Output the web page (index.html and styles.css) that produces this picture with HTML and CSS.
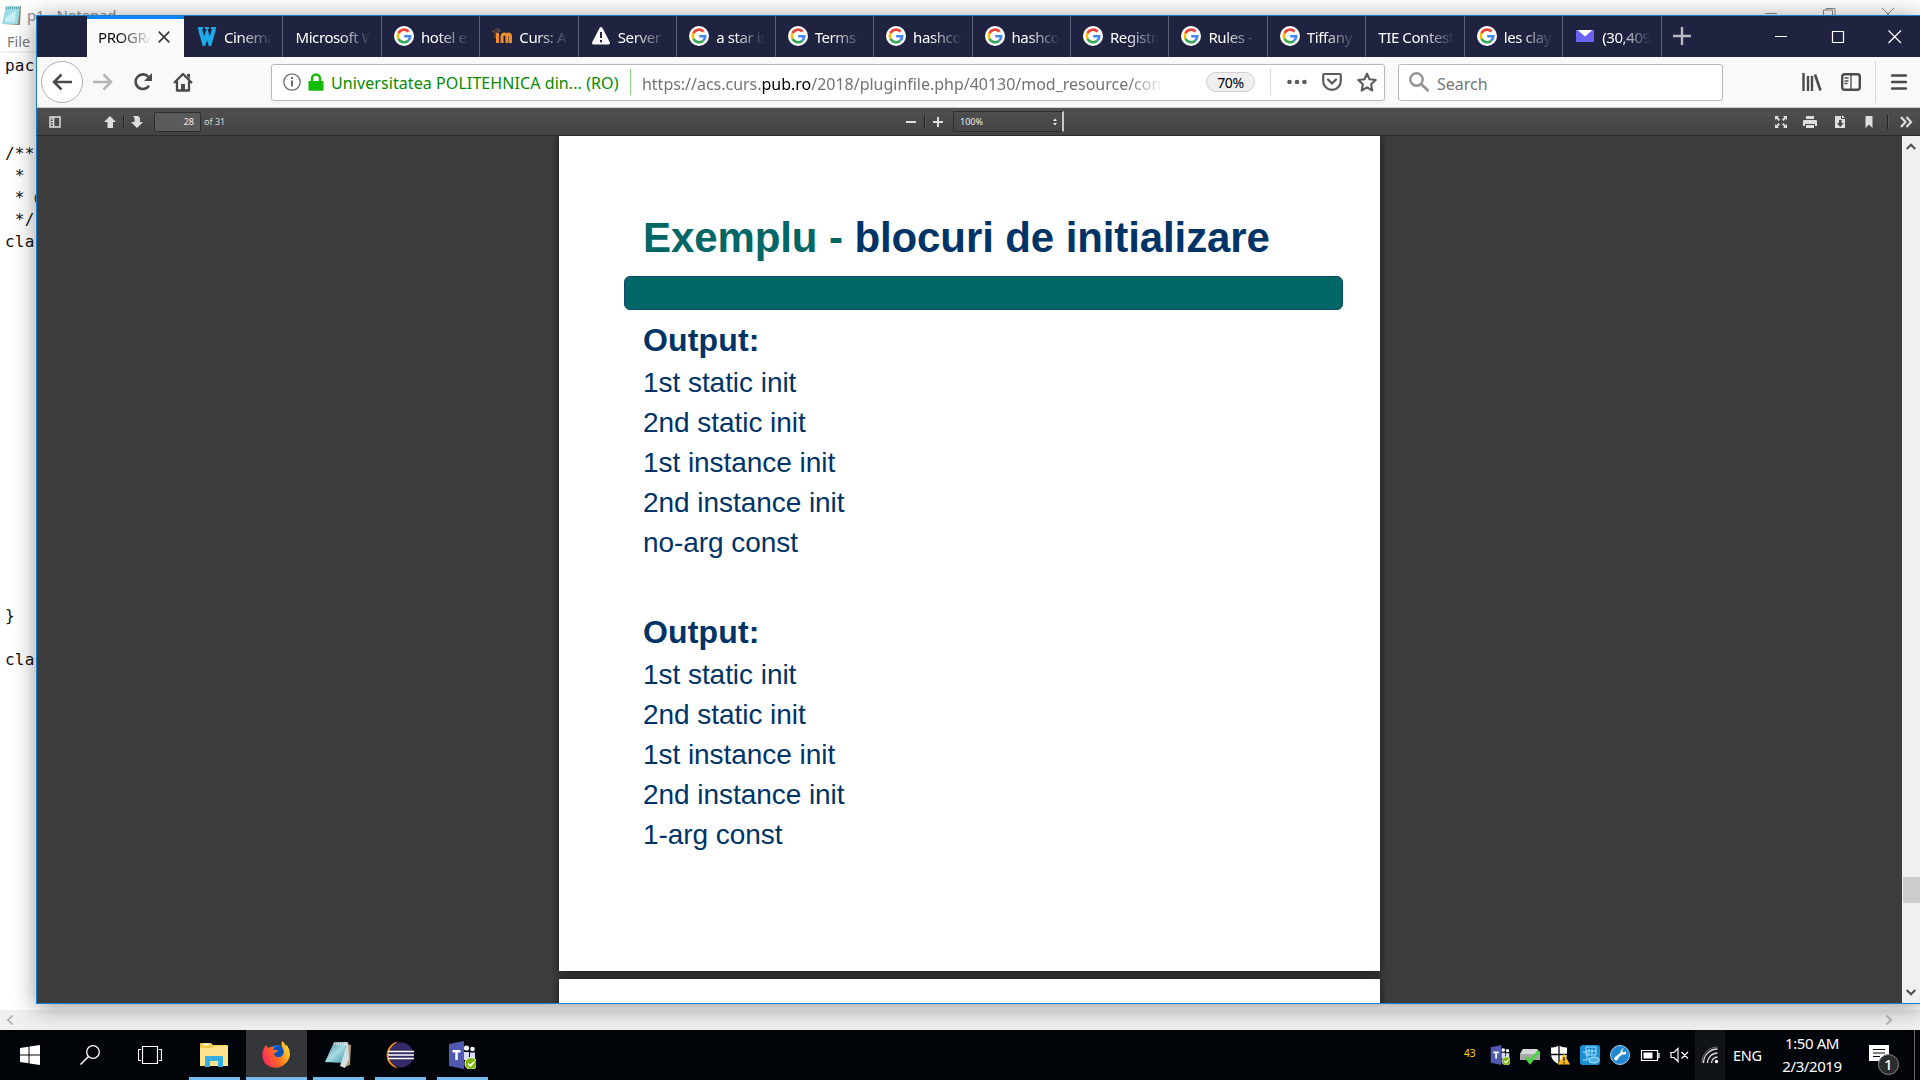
FILE: index.html
```html
<!DOCTYPE html>
<html lang="en">
<head>
<meta charset="utf-8">
<title>Exemplu - blocuri de initializare</title>
<link rel="stylesheet" href="styles.css">
</head>
<body>
<svg class="defs" aria-hidden="true">
  <symbol id="google" viewBox="0 0 20 20">
    <circle cx="10" cy="10" r="10" fill="#fff"/>
    <g fill="none" stroke-width="2.6">
      <path d="M14.6 5.6A6.2 6.2 0 0 0 4.5 7.2" stroke="#ea4335"/>
      <path d="M4.5 7.2a6.2 6.2 0 0 0 0 5.7" stroke="#fbbc05"/>
      <path d="M4.5 12.9a6.2 6.2 0 0 0 9.6 1.8" stroke="#34a853"/>
      <path d="M10.2 10.2h6c0 2-.8 3.5-2.1 4.5" stroke="#4285f4"/>
    </g>
  </symbol>
  <symbol id="teams" viewBox="0 0 28 28">
    <circle cx="18.5" cy="7" r="2.6" fill="#fff"/><circle cx="24.5" cy="8" r="2.3" fill="#fff"/>
    <path d="M16 11h5v8h-5zM22 11.5h5v6h-5z" fill="#d8d9f2"/>
    <path d="M1 3l15-3v28L1 25z" fill="#5059b0"/>
    <path d="M4.5 9h8v2.4H9.8V19H7.3v-7.6H4.5z" fill="#fff"/>
    <circle cx="23" cy="22.5" r="6" fill="#7db700" stroke="#fff"/>
    <path d="M20 22.5l2.3 2.4 4-4.4" fill="none" stroke="#fff" stroke-width="1.7"/>
  </symbol>
  <symbol id="notepad" viewBox="0 0 28 28">
    <path d="M23 3l4 1-1 20-5 2z" fill="#b39a68"/>
    <path d="M10 1h14l-5 21L1 21z" fill="url(#paper)"/>
    <path d="M24 1l1 17-4 9-5-2z" fill="#cfdfe3"/>
    <path d="M10 3h14" stroke="#dbe4e6" stroke-width="2" stroke-dasharray="1 1" fill="none"/>
  </symbol>
  <linearGradient id="paper" x1="0" y1="0" x2="1" y2="1"><stop offset="0" stop-color="#3d7f8d"/><stop offset=".5" stop-color="#a7dce5"/><stop offset="1" stop-color="#2c8ca1"/></linearGradient>
  <linearGradient id="fox" x1="0" y1=".6" x2="1" y2=".2"><stop offset="0" stop-color="#ff2a5c"/><stop offset=".45" stop-color="#ff6a22"/><stop offset="1" stop-color="#ffe62e"/></linearGradient>
</svg>

<main class="desktop">
  <section class="notepad">
    <header class="np-title">
      <svg class="np-icon" viewBox="0 0 20 22"><path d="M4 2h15l-1 19-16-1z" fill="#8a8068"/><path d="M4 2h14l-2 18H0z" fill="#9bdbe6"/><path d="M4 4h13" stroke="#5b9eaa" stroke-width="2" stroke-dasharray="1 1"/><path d="M3 14l11-8-1 12H3z" fill="#c5eef3"/></svg>
      <span>p1 - Notepad</span>
      <svg class="np-controls" viewBox="0 0 130 20"><path d="M0 13.5h12M58.5 20v-10h9v10M61 10V8.5h9V18M117 8l12 12M129 8l-12 12" fill="none" stroke="#8a8a8a"/></svg>
    </header>
    <div class="np-menu">File</div>
    <pre class="np-text">pac



/**
 *
 * @
 */
cla
















}

cla</pre>
    <footer class="np-scroll">
      <svg viewBox="0 0 8 10"><path d="M6.5 .5L2 5l4.5 4.5" fill="none" stroke="#b8b8b8" stroke-width="2"/></svg>
      <svg viewBox="0 0 8 10"><path d="M1.5 .5L6 5l-4.5 4.5" fill="none" stroke="#b8b8b8" stroke-width="2"/></svg>
    </footer>
  </section>

  <section class="firefox">
    <header class="tabs">
      <div class="tab active"><span class="label">PROGRA</span><svg class="close" viewBox="0 0 12 12"><path d="M.7.7l10.6 10.6M11.3.7L.7 11.3" stroke="#3b3b3d" stroke-width="1.7"/></svg></div>
      <div class="tab"><svg class="fav" viewBox="0 0 20 20"><path d="M3 3l4 14 3-9 3 9 4-14" fill="none" stroke="#1ca9e6" stroke-width="4"/><path d="M1 2h5M8 2h4M14 2h5" stroke="#1ca9e6" stroke-width="2"/></svg><span class="label">Cinema</span></div>
      <div class="tab"><span class="label">Microsoft W</span></div>
      <div class="tab"><svg class="fav"><use href="#google"/></svg><span class="label">hotel e</span></div>
      <div class="tab"><svg class="fav" viewBox="0 0 20 20"><path d="M0 6l6-3 2 2-5 2v5" fill="none" stroke="#5a4a45" stroke-width="1.5"/><path d="M5.5 17V7M10 17v-6q0-3 2.5-3T15 11v6M15 17v-6q0-3 1.8-3T18.5 11v6" fill="none" stroke="#ef8a2d" stroke-width="3"/></svg><span class="label">Curs: A</span></div>
      <div class="tab"><svg class="fav" viewBox="0 0 20 20"><path d="M10 2.5L17.5 17h-15z" fill="#f9f9fa" stroke="#f9f9fa" stroke-width="3" stroke-linejoin="round"/><path d="M10 6v6M10 14v2.2" stroke="#202340" stroke-width="2"/></svg><span class="label">Server I</span></div>
      <div class="tab"><svg class="fav"><use href="#google"/></svg><span class="label">a star is</span></div>
      <div class="tab"><svg class="fav"><use href="#google"/></svg><span class="label">Terms -</span></div>
      <div class="tab"><svg class="fav"><use href="#google"/></svg><span class="label">hashco</span></div>
      <div class="tab"><svg class="fav"><use href="#google"/></svg><span class="label">hashco</span></div>
      <div class="tab"><svg class="fav"><use href="#google"/></svg><span class="label">Registr</span></div>
      <div class="tab"><svg class="fav"><use href="#google"/></svg><span class="label">Rules -</span></div>
      <div class="tab"><svg class="fav"><use href="#google"/></svg><span class="label">Tiffany</span></div>
      <div class="tab"><span class="label">TIE Contest</span></div>
      <div class="tab"><svg class="fav"><use href="#google"/></svg><span class="label">les clay</span></div>
      <div class="tab"><svg class="fav" viewBox="0 0 20 20"><path d="M1 4h18v12H1z" fill="#6b63f6"/><path d="M2.5 4h15L10 10.5z" fill="#fff"/></svg><span class="label">(30,409</span></div>
      <svg class="newtab" viewBox="0 0 18 18"><path d="M9 0v18M0 9h18" stroke="#b9b9c2" stroke-width="2.4"/></svg>
      <svg class="win-controls" viewBox="0 0 128 14"><path d="M0 6.5h12M57.5 1.5h11v11h-11zM113.5.5l12.5 12.5M126 .5L113.5 13" fill="none" stroke="#fff" stroke-width="1.2"/></svg>
    </header>

    <nav class="navbar">
      <div class="back"><svg viewBox="0 0 20 18"><path d="M20 9H2M9.5 1.5L2 9l7.5 7.5" fill="none" stroke="#4a4a4c" stroke-width="2.5"/></svg></div>
      <svg class="forward" viewBox="0 0 20 18"><path d="M0 9h18M10.5 1.5L18 9l-7.5 7.5" fill="none" stroke="#b5b5b6" stroke-width="2.5"/></svg>
      <svg class="reload" viewBox="0 0 20 20"><path d="M16 13.7A7.3 7.3 0 1 1 15.5 5" fill="none" stroke="#4a4a4c" stroke-width="2.6"/><path d="M19 1v8h-8z" fill="#4a4a4c"/></svg>
      <svg class="home" viewBox="0 0 20 20"><path d="M1 11l9-9 9 9M4 9v9.5h12V9" fill="none" stroke="#4a4a4c" stroke-width="2.3" stroke-linejoin="round"/><path d="M8 12h4v6H8zM14 2h3v5l-3-3z" fill="#4a4a4c"/></svg>
      <div class="urlbar">
        <svg class="info" viewBox="0 0 18 18"><circle cx="9" cy="9" r="8.2" fill="none" stroke="#6b6b6d" stroke-width="1.3"/><path d="M9 4v2M9 7.5v6" stroke="#6b6b6d" stroke-width="2"/></svg>
        <svg class="lock" viewBox="0 0 16 18"><rect x=".5" y="8" width="15" height="9.7" rx="1.3" fill="#12bc00"/><path d="M4 9V5.5a4 4 0 0 1 8 0V9" fill="none" stroke="#12bc00" stroke-width="2.4"/></svg>
        <span class="identity">Universitatea POLITEHNICA din... (RO)</span>
        <span class="url">https://acs.curs.<b>pub.ro</b>/2018/pluginfile.php/40130/mod_resource/con</span>
        <span class="zoom">70%</span>
        <div class="actions">
          <svg class="dots" viewBox="0 0 20 6"><g fill="#5c5c5e"><circle cx="2.5" cy="3" r="2.3"/><circle cx="10" cy="3" r="2.3"/><circle cx="17.5" cy="3" r="2.3"/></g></svg>
          <svg class="act" viewBox="0 0 20 20"><path d="M2.5 2h15q1.3 0 1.3 1.3V9a8.8 8.8 0 0 1-17.6 0V3.3Q1.2 2 2.5 2z" fill="none" stroke="#5c5c5e" stroke-width="2.2"/><path d="M6 7.5l4 4 4-4" fill="none" stroke="#5c5c5e" stroke-width="2.3" stroke-linecap="round" stroke-linejoin="round"/></svg>
          <svg class="act" viewBox="0 0 20 20"><path d="M10 1.7l2.5 5.6 6.2.7-4.6 4.2 1.2 6.3L10 15.4l-5.3 3.1 1.2-6.3L1.3 8l6.2-.7z" fill="none" stroke="#5c5c5e" stroke-width="2.1" stroke-linejoin="round"/></svg>
        </div>
      </div>
      <div class="searchbox"><svg viewBox="0 0 20 20"><circle cx="7.5" cy="7.5" r="6.2" fill="none" stroke="#939394" stroke-width="2.4"/><path d="M12 12l7.5 7" stroke="#939394" stroke-width="2.8"/></svg><span>Search</span></div>
      <div class="nav-end">
        <svg class="library" viewBox="0 0 20 18"><path d="M1.5 0v18M6 3v15M10 3v15" stroke="#4a4a4c" stroke-width="2.4"/><path d="M13 1.5l5.5 16" stroke="#4a4a4c" stroke-width="2.6"/></svg>
        <svg class="side" viewBox="0 0 20 18"><rect x="1.2" y="1.2" width="17.6" height="15.6" rx="2.5" fill="none" stroke="#4a4a4c" stroke-width="2.4"/><path d="M10 1v16M3.5 5h4M3.5 8h4M3.5 10.5h3" stroke="#4a4a4c" stroke-width="1.3"/></svg>
        <div class="menu"><svg viewBox="0 0 16 16"><path d="M1 1.5h14M1 8h14M1 14.5h14" stroke="#4a4a4c" stroke-width="2.3" stroke-linecap="round"/></svg></div>
      </div>
    </nav>

    <div class="pdfbar">
      <div class="pdf-left">
        <svg class="p-side" viewBox="0 0 12 12"><path d="M1 1h10v10H1zM4.5 1v10" fill="none" stroke="#dedede" stroke-width="1.5"/><path d="M2 3h2M2 5.5h2M2 8h2" stroke="#dedede"/></svg>
        <svg class="p-up" viewBox="0 0 12 12"><path d="M6 0l6 6H9v6H3.5V6H0z" fill="#dedede"/></svg>
        <i></i>
        <svg class="p-down" viewBox="0 0 12 12"><path d="M6 12l6-6H9V2L7 0H2l1.5 2v4H0z" fill="#dedede"/></svg>
        <span class="page-input">28</span><span>of 31</span>
      </div>
      <div class="pdf-mid">
        <svg viewBox="0 0 10 10"><path d="M0 5h10" stroke="#dedede" stroke-width="2"/></svg>
        <i></i>
        <svg viewBox="0 0 10 10"><path d="M0 5h10M5 0v10" stroke="#dedede" stroke-width="2"/></svg>
        <span class="scale">100%<svg viewBox="0 0 6 8"><path d="M1 3l2-2.5L5 3zM1 5l2 2.5L5 5z" fill="#eee"/></svg></span>
      </div>
      <div class="pdf-right">
        <svg viewBox="0 0 14 14"><path d="M1 5V1h4L3.7 2.3 6 4.5 4.5 6 2.3 3.7zM13 5V1H9l1.3 1.3L8 4.5 9.5 6l2.2-2.3zM1 9v4h4l-1.3-1.3L6 9.5 4.5 8l-2.2 2.3zM13 9v4H9l1.3-1.3L8 9.5 9.5 8l2.2 2.3z" fill="#dedede"/></svg>
        <svg viewBox="0 0 14 14"><path d="M3 1h8v3H3zM0 6q0-1 1-1h12q1 0 1 1v5h-2V9H2v2H0zM3 10h8v3H3z" fill="#dedede"/></svg>
        <svg viewBox="0 0 14 14"><path d="M2 1h6v3h4v9H2zM9 0l3 3H9z" fill="#dedede"/><path d="M6 5h2.5v3h2L7.2 12 4 8h2z" fill="#444"/></svg>
        <svg viewBox="0 0 14 14"><path d="M3.5 1h7v12L7 9.5 3.5 13z" fill="#dedede"/></svg>
        <i></i>
        <svg viewBox="0 0 14 14"><path d="M2 2l4.500 5L2 12M7.500 2L12 7l-4.500 5" fill="none" stroke="#dedede" stroke-width="2.2"/></svg>
      </div>
    </div>

    <div class="viewer">
      <div class="pages">
        <article class="page slide">
          <h1><em>Exemplu - </em>blocuri de initializare</h1>
          <div class="rule"></div>
          <div class="output">
            <h2>Output:</h2>
            <p>1st static init</p><p>2nd static init</p><p>1st instance init</p><p>2nd instance init</p><p>no-arg const</p>
          </div>
          <div class="output">
            <h2>Output:</h2>
            <p>1st static init</p><p>2nd static init</p><p>1st instance init</p><p>2nd instance init</p><p>1-arg const</p>
          </div>
        </article>
        <div class="page next"></div>
      </div>
      <div class="scrollbar">
        <svg viewBox="0 0 10 7"><path d="M.7 6L5 1.7 9.3 6" fill="none" stroke="#505050" stroke-width="2"/></svg>
        <div class="thumb"></div>
        <svg viewBox="0 0 10 7"><path d="M.7 1L5 5.3 9.3 1" fill="none" stroke="#505050" stroke-width="2"/></svg>
      </div>
    </div>
  </section>
</main>

<footer class="taskbar">
  <div class="sys"><svg width="20" height="20" viewBox="0 0 20 20"><path d="M0 3l8.5-1.2v7.700H0zM9.5 1.6L20 0v9.5H9.5zM0 10.5h8.5v7.700L0 17zM9.5 10.5H20V20L9.5 18.4z" fill="#fff"/></svg></div>
  <div class="sys"><svg width="20" height="20" viewBox="0 0 20 20"><circle cx="13" cy="7" r="6.3" fill="none" stroke="#fff" stroke-width="1.3"/><path d="M8.5 11.5L.5 19.5" stroke="#fff" stroke-width="1.5"/></svg></div>
  <div class="sys"><svg width="24" height="18" viewBox="0 0 24 18"><path d="M4.5.5h15v17h-15zM3 3.5H.5v11H3M21 3.5h2.5v11H21" fill="none" stroke="#fff" stroke-width="1.2"/></svg></div>
  <div class="app"><svg width="28" height="24" viewBox="0 0 28 24"><path d="M0 1q0-1 1-1h10l2 2h14q1 0 1 1v20H0z" fill="#f5c84c"/><path d="M0 5h12l2-2h14v20H0z" fill="#ffe28c"/><path d="M5 24V14q0-1 1-1h16q1 0 1 1v10h-5v-6h-8v6z" fill="#35aee6"/><path d="M3 1.5h6" stroke="#fff" stroke-width="1.5"/></svg></div>
  <div class="app current"><svg width="28" height="28" viewBox="0 0 28 28"><circle cx="14.5" cy="14" r="10" fill="#1271d8"/><path d="M15 5q4-1 6 3l2 7-6 7H8l-2-8z" fill="#0a52bb"/><path d="M4 4l2 3q3-2 6-1l-1 3h5q-1 3-4 3l1 3q4 3 8-1 2-4-1-8-1-3 0-6 3 2 4 5l1-1q6 10 0 17-7 8-16 5Q-2 22 1 9z" fill="url(#fox)"/></svg></div>
  <div class="app"><svg width="28" height="28"><use href="#notepad"/></svg></div>
  <div class="app"><svg class="eclipse" width="30" height="28" viewBox="0 0 30 28"><path d="M14 .5a13.7 13.7 0 0 0 0 27A16 16 0 0 1 14 .5" fill="#f7941e"/><circle cx="17" cy="14" r="12.5" fill="#372a68"/><path d="M4 10.5h26M4 14h26M4 17.5h26" stroke="#fff" stroke-width="1.7"/></svg></div>
  <div class="app"><svg width="28" height="28"><use href="#teams"/></svg></div>
  <div class="tray">
    <span class="temp">43</span>
    <svg viewBox="0 0 28 28"><use href="#teams"/></svg>
    <svg viewBox="0 0 20 20"><path d="M3 4h14l3 5v6H0V9z" fill="#a5a7a8"/><path d="M3 4h14l3 5H0z" fill="#d6d8d8"/><path d="M6 12l4 5 9-11" fill="none" stroke="#4fd14a" stroke-width="3.4"/></svg>
    <svg viewBox="0 0 20 20"><path d="M9 .5q4 2.5 8 2v7q0 6-8 10-8-4-8-10v-7q4 .5 8-2z" fill="#fff"/><path d="M9 0v20M1 9.5h16" stroke="#05070c" stroke-width="1.3"/><path d="M14 8.5L20 19.5H8z" fill="#fdb813"/><path d="M14 12.5v3.5M14 17v1.5" stroke="#222" stroke-width="1.4"/></svg>
    <svg viewBox="0 0 20 20"><rect width="20" height="20" rx="3" fill="#1c8ed2"/><path d="M3 7h4v8H3M6 2h10v8H6zM9 4v6M12 4v6M6 6h10M8 14h9M9 17h8" fill="none" stroke="#a8e2ff"/><ellipse cx="14" cy="15" rx="5" ry="3" fill="#4eb4e8" stroke="#bce8ff"/></svg>
    <svg viewBox="0 0 20 20"><circle cx="10" cy="10" r="9.5" fill="#2389d2" stroke="#a4d3ef"/><path d="M5 14l8-7" stroke="#fff" stroke-width="2.5"/><path d="M16 6l-3 2-1-2 2-3a4 4 0 0 0-3 5q2 3 5 1zM4 14l2-3 3 2-3 3z" fill="#fff"/></svg>
    <svg viewBox="0 0 20 20"><path d="M1.5 5.5h16v10h-16zM17.5 8.5h1.5v4h-1.5" fill="none" stroke="#fff" stroke-width="1.2"/><path d="M3.5 7.5h9v6h-9z" fill="#fff"/></svg>
    <svg viewBox="0 0 20 20"><path d="M1 7.5h3l4-4v13l-4-4H1zM11.5 7l6.5 6.5M18 7l-6.5 6.5" fill="none" stroke="#fff" stroke-width="1.2"/></svg>
    <span class="wifi"><svg viewBox="0 0 20 20"><path d="M3.5 18A14 14 0 0 1 17.5 4M7.5 18a10 10 0 0 1 10-10M11.5 18a6 6 0 0 1 6-6" fill="none" stroke="#d8d8d8" stroke-width="1.3"/><path d="M2 18A15.5 15.5 0 0 1 17.5 2" fill="none" stroke="#777"/><circle cx="16.5" cy="16.5" r="1.7" fill="#fff"/></svg></span>
    <span class="lang">ENG</span>
    <div class="clock"><span>1:50 AM</span><span>2/3/2019</span></div>
    <div class="notify"><svg viewBox="0 0 30 30"><path d="M0 0h20v16h-6v4l-5-4H0z" fill="#fff"/><path d="M4 4.5h12M4 8h12M4 11.5h7" stroke="#05070c" stroke-width="1.2"/><circle cx="19.5" cy="19.5" r="10" fill="#2b2c2e" stroke="#8a8a8a"/></svg><b>1</b></div>
  </div>
</footer>
</body>
</html>
```
FILE: styles.css
```css
* { box-sizing: border-box; }
body { margin: 0; width: 1920px; height: 1080px; overflow: hidden; display: flex; flex-direction: column; font-family: "Noto Sans", "Open Sans", sans-serif; }
svg { display: block; flex: none; }
.defs { position: absolute; width: 0; height: 0; }
.desktop { position: relative; height: 1030px; overflow: hidden; background: #fff; }

.notepad { height: 1030px; display: flex; flex-direction: column; }
.np-title { height: 30px; display: flex; align-items: center; padding-left: 2px; color: #8f8f8f; font-size: 15px; letter-spacing: -.2px; }
.np-icon { width: 20px; height: 22px; margin-right: 5px; }
.np-controls { width: 130px; height: 20px; margin: 0 25px 10px auto; }
.np-menu { height: 23px; padding-left: 7px; font-size: 14.5px; line-height: 23px; color: #777; border-bottom: 2px solid #f0f0f0; }
.np-text { flex: 1; margin: 0; padding: 2px 0 0 5px; font: 16px/22px "DejaVu Sans Mono", monospace; letter-spacing: .2px; color: #111; }
.np-scroll { height: 20px; padding: 0 27px 0 6px; background: #f0f0f0; display: flex; align-items: center; justify-content: space-between; }
.np-scroll svg { width: 8px; height: 10px; }

.firefox { position: absolute; left: 36px; top: 15px; width: 1885px; height: 989px; border: 1px solid #1a7fd0; box-shadow: 0 3px 22px rgba(0,0,0,.42); display: flex; flex-direction: column; background: #3d3d3d; }
.tabs { height: 41px; padding-left: 50px; background: #202340; display: flex; flex: none; }
.tab { width: 98.45px; padding: 0 10px 0 12px; border-right: 1px solid #5c5e77; display: flex; align-items: center; color: #fff; font-size: 15px; letter-spacing: -.4px; flex: none; }
.tab.active { width: 97px; margin-right: 1px; padding: 0 14px 0 11px; border: 0; border-top: 3px solid #0a84ff; background: #f9f9fa; color: #0c0c0d; }
.active .label { padding-bottom: 3px; }
.label { flex: 1; overflow: hidden; white-space: nowrap; line-height: 22px; -webkit-mask-image: linear-gradient(to left, transparent, #000 32px); mask-image: linear-gradient(to left, transparent, #000 32px); }
.close { width: 12px; height: 12px; margin: 0 0 3px 7px; }
.fav { width: 20px; height: 20px; margin: 0 7px 2px 0; }
.newtab { width: 18px; height: 18px; margin: 11px 0 0 11px; }
.win-controls { width: 128px; height: 14px; margin: 14px 17px 0 auto; }

.navbar { height: 51px; flex: none; background: #f9f9fa; border-bottom: 1px solid #ccc; display: flex; align-items: center; }
.back { width: 42px; height: 42px; margin-left: 4px; border: 1px solid #b1b1b3; border-radius: 50%; background: #fff; display: flex; align-items: center; justify-content: center; flex: none; }
.back svg, .forward { width: 20px; height: 18px; }
.forward { margin-left: 10px; }
.reload { width: 20px; height: 20px; margin-left: 20px; }
.home { width: 20px; height: 20px; margin-left: 20px; }
.urlbar { width: 1114px; height: 37px; margin-left: 78px; padding-left: 11px; border: 1px solid #b8b8b9; border-radius: 3px; background: #fff; box-shadow: 0 1px 4px rgba(0,0,0,.06); display: flex; align-items: center; font-size: 16px; flex: none; }
.info { width: 18px; height: 18px; }
.lock { width: 16px; height: 18px; margin-left: 7px; }
.identity { width: 300px; height: 26px; margin-left: 7px; border-right: 1px solid #86d97c; color: #058b00; line-height: 29px; letter-spacing: .08px; white-space: nowrap; }
.url { width: 522px; margin-left: 11px; padding-top: 3px; overflow: hidden; white-space: nowrap; color: #737373; letter-spacing: -.02px; -webkit-mask-image: linear-gradient(to left, transparent, #000 36px); mask-image: linear-gradient(to left, transparent, #000 36px); }
.url b { font-weight: 400; color: #000; }
.zoom { width: 49px; height: 20px; margin-left: 42px; border: 1px solid #cfcfcf; border-radius: 10px; background: #efefef; font-size: 14px; line-height: 19px; text-align: center; letter-spacing: -.3px; }
.actions { height: 26px; margin-left: 15px; padding-left: 16px; border-left: 1px solid #d7d7db; display: flex; align-items: center; gap: 15px; }
.dots { width: 20px; height: 6px; }
.act { width: 20px; height: 20px; }
.searchbox { width: 325px; height: 37px; margin-left: 13px; padding-left: 10px; border: 1px solid #b8b8b9; border-radius: 3px; background: #fff; display: flex; align-items: center; gap: 8px; font-size: 16px; color: #757575; flex: none; }
.searchbox span { padding-top: 3px; }
.searchbox svg { width: 20px; height: 20px; }
.nav-end { display: flex; align-items: center; margin-left: 79px; }
.library { width: 20px; height: 18px; }
.side { width: 20px; height: 18px; margin-left: 19px; }
.menu { height: 42px; margin-left: 14px; padding-left: 15px; border-left: 1px solid #d7d7db; display: flex; align-items: center; }
.menu svg { width: 16px; height: 16px; }

.pdfbar { height: 28px; flex: none; background: linear-gradient(#505050, #434343); border-bottom: 1px solid #2b2b2b; display: flex; align-items: center; color: #d9d9d9; font-size: 9px; }
.pdfbar > div { display: flex; align-items: center; }
.pdfbar i { width: 1px; height: 14px; background: #222; box-shadow: 1px 0 #585858; }
.pdf-left { width: 867px; }
.p-side { width: 12px; height: 12px; margin-left: 12px; }
.p-up, .p-down { width: 12px; height: 12px; }
.p-up { margin: 0 7px 0 43px; }
.p-down { margin: 0 11px 0 7px; }
.page-input { width: 47px; height: 20px; margin-right: 3px; padding-right: 6px; border: 1px solid #2d2d2d; border-radius: 2px; background: #5a5a5a; text-align: right; line-height: 18px; color: #eee; }
.pdf-mid svg { width: 10px; height: 10px; }
.pdf-mid { padding-left: 2px; }
.pdf-mid i { margin: 0 8px 0 8px; }
.scale { width: 111px; height: 21px; margin-left: 10px; padding: 0 4px 0 6px; border: 1px solid #2d2d2d; border-right: 2px solid #c8c8c8; display: flex; align-items: center; justify-content: space-between; color: #eee; }
.pdf-mid .scale svg { width: 6px; height: 8px; }
.pdf-right { margin-left: auto; padding-right: 7px; }
.pdf-right svg { width: 14px; height: 14px; margin-right: 15.6px; }
.pdf-right i { margin: 0 11px 0 -5px; }
.pdf-right svg:last-child { margin-right: 0; }

.viewer { flex: 1; min-height: 0; display: flex; background: #3d3d3d; }
.pages { width: 1865px; padding-left: 522px; overflow: hidden; }
.page { width: 821px; background: #fff; box-shadow: 0 0 8px 1px rgba(0,0,0,.55); }
.slide { height: 835px; padding: 78px 0 0 65px; color: #003366; font-family: "Liberation Sans", Arial, sans-serif; }
.next { height: 60px; margin-top: 8px; }
.slide h1 { margin: 0 0 14px 19px; font-size: 42px; line-height: 48px; letter-spacing: -.1px; white-space: nowrap; }
.slide em { font-style: normal; color: #006666; }
.rule { width: 719px; height: 34px; border: 1px solid #0c4a70; border-radius: 6px; background: #006666; }
.output { padding: 10px 0 0 19px; }
.output + .output { padding-top: 49px; }
.output h2 { margin: 0 0 3px; font-size: 32px; line-height: 40px; letter-spacing: .15px; }
.output p { margin: 0; font-size: 28px; line-height: 40px; letter-spacing: -.05px; }
.scrollbar { width: 18px; padding: 7px 0; background: #f0f0f0; display: flex; flex-direction: column; align-items: center; flex: none; }
.scrollbar svg { width: 10px; height: 7px; }
.thumb { width: 17px; height: 26px; margin: 727px 0 auto; background: #cdcdcd; }

.taskbar { height: 50px; background: #010409; display: flex; color: #fff; }
.sys { width: 60px; display: flex; align-items: center; justify-content: center; }
.app { width: 62px; height: 50px; display: flex; flex-direction: column; align-items: center; justify-content: center; position: relative; padding-right: 2px; }
.sys + .app { margin-left: 4px; }
.app::after { content: ""; position: absolute; left: 5px; bottom: 0; width: 51px; height: 3px; background: #76b9ed; }
.app.current { background: #35363a; border-right: 1px solid #010409; }
.app.current::after { left: 0; width: 61px; }
.eclipse { margin-right: 3px; }
.tray { margin-left: auto; display: flex; align-items: center; padding-right: 5px; height: 50px; }
.tray > svg { width: 20px; height: 20px; margin-right: 10px; }
.temp { width: 26px; margin-bottom: 5px; font-size: 10px; color: #ffd400; }
.wifi { width: 30px; height: 50px; margin-left: -5px; background: #101419; display: flex; align-items: center; justify-content: center; }
.wifi svg { width: 20px; height: 20px; }
.lang { width: 47px; padding-left: 8px; font-size: 14.5px; letter-spacing: -.3px; }
.clock { width: 80px; display: flex; flex-direction: column; text-align: center; font-size: 15px; line-height: 23px; letter-spacing: -.4px; padding-bottom: 1px; }
.notify { position: relative; width: 45px; height: 30px; margin: 9px 0 0 17px; }
.notify svg { width: 30px; height: 30px; }
.notify b { position: absolute; left: 15px; top: 9px; width: 10px; font-size: 15px; line-height: 21px; font-weight: 500; }
.tray::after { content: ""; width: 1px; height: 50px; background: #666; }
```
